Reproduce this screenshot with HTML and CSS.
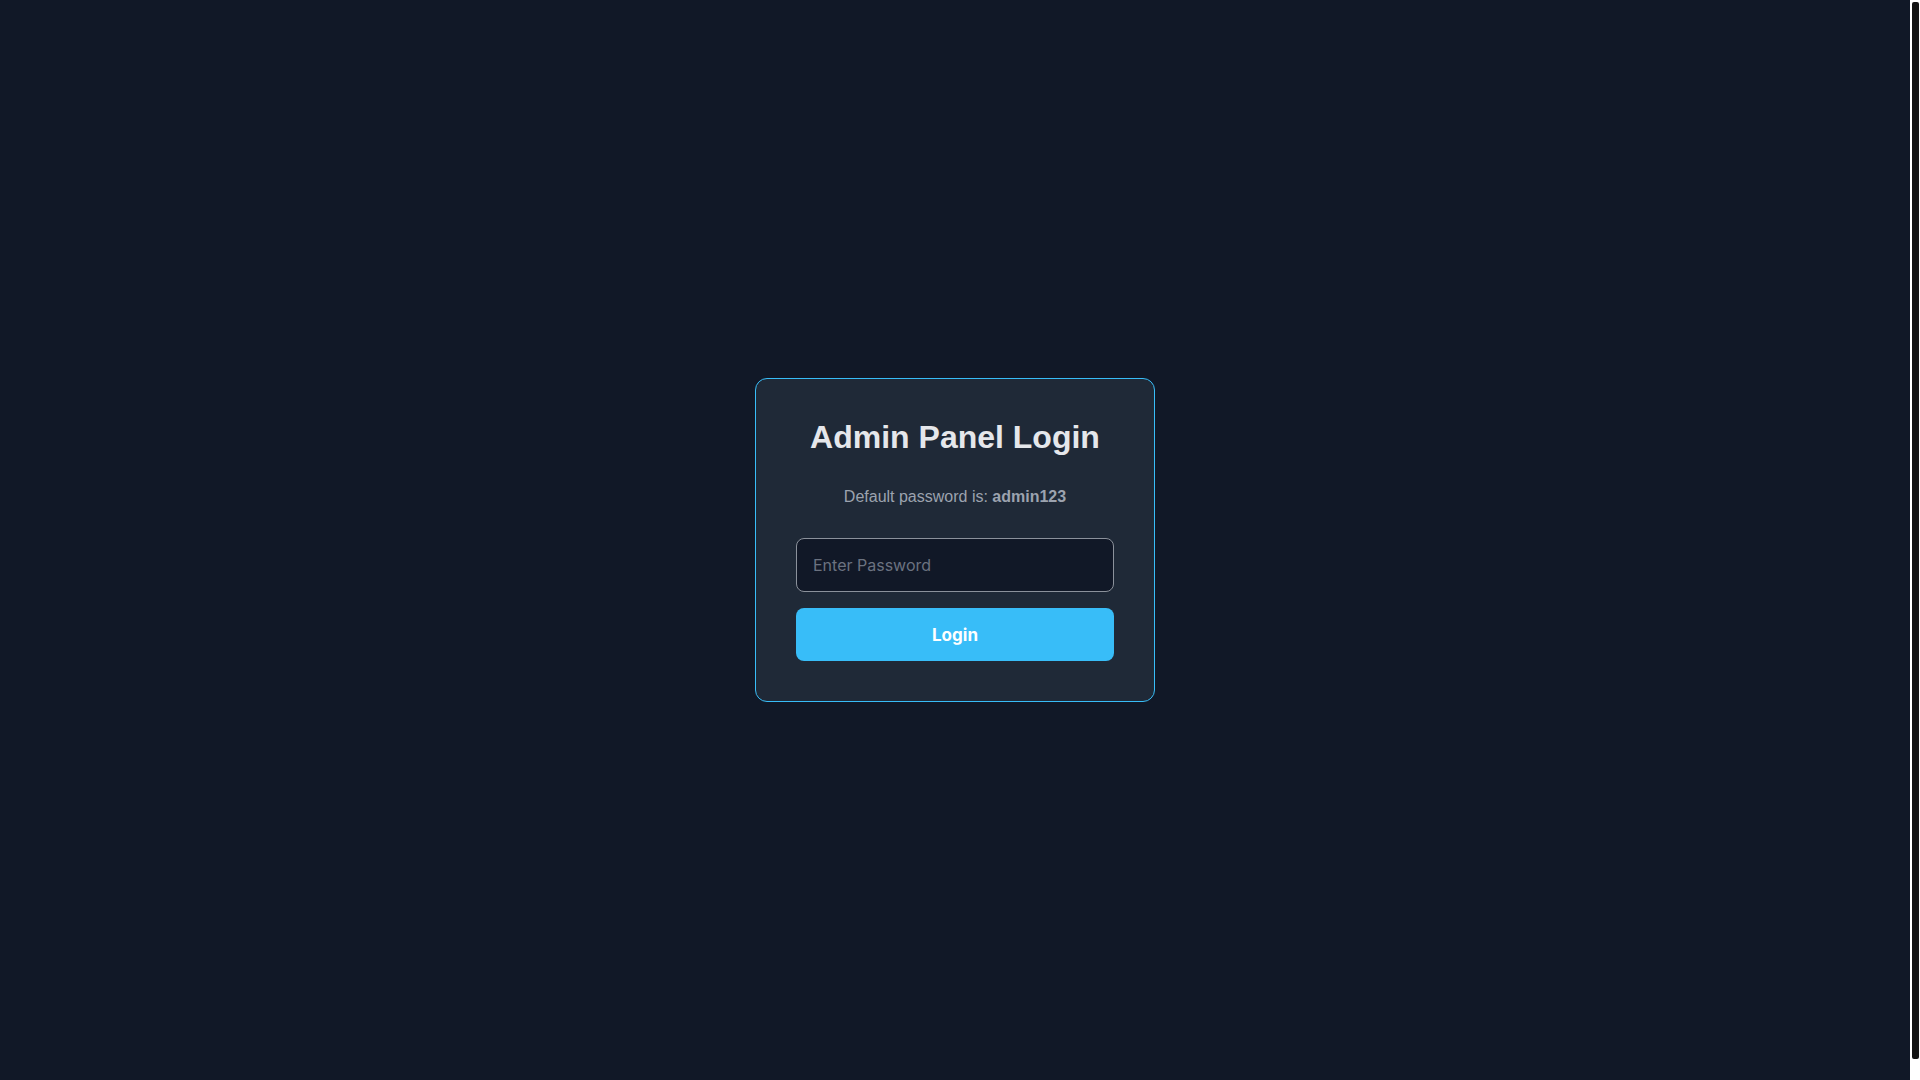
FILE: index.html
```html
<html>
  <head>
    <meta name="viewport" content="width=device-width, initial-scale=1">
    <link rel="stylesheet" href="styles.css">
    <title>Admin Panel Login</title>
  </head>
  <body>
    <main class="page">
      <form class="login-card" onsubmit="return false;">
        <h1 class="login-title">Admin Panel Login</h1>
        <p class="login-hint">Default password is: <b>admin123</b></p>
        <input class="login-input" type="password" placeholder="Enter Password">
        <button class="login-button" type="submit">Login</button>
      </form>
    </main>
    <div class="scrollbar"><div class="scrollbar-thumb"></div></div>
  </body>
</html>
```

FILE: styles.css
```css
html {
  background-color: #111827;
}

body {
  margin: 0;
  font-family: "Liberation Sans", Arial, sans-serif;
  background-color: #111827;
  color: #e5e7eb;
  overflow: hidden;
}

.page {
  min-height: 100vh;
  margin-right: 10px;
  display: flex;
  align-items: center;
  justify-content: center;
}

.scrollbar {
  position: fixed;
  top: 0;
  right: 0;
  width: 10px;
  height: 100vh;
  background: #ffffff;
  box-sizing: border-box;
  padding: 2px 1px 21px 2px;
}

.scrollbar-thumb {
  height: 100%;
  background: #121212;
  border-radius: 2px;
}

.login-card {
  width: 400px;
  box-sizing: border-box;
  padding: 40px;
  margin: 0;
  background-color: #1f2937;
  border: 1px solid #38bdf8;
  border-radius: 12px;
  display: flex;
  flex-direction: column;
  text-align: center;
}

.login-title {
  margin: 0 0 32px;
  font-size: 32px;
  font-weight: bold;
  color: #e5e7eb;
}

.login-hint {
  margin: 0 0 32px;
  font-size: 16px;
  color: #9ca3af;
}

.login-input {
  height: 54px;
  box-sizing: border-box;
  padding: 0 16px;
  margin-bottom: 16px;
  font-family: Inter, "Noto Sans", sans-serif;
  font-size: 16px;
  color: #e5e7eb;
  background-color: #111827;
  border: 1px solid #8b919b;
  border-radius: 8px;
  outline: none;
}

.login-input::placeholder {
  color: #6b7280;
}

.login-button {
  height: 53px;
  box-sizing: border-box;
  font-family: Inter, "Noto Sans", sans-serif;
  font-size: 17px;
  font-weight: 700;
  color: #ffffff;
  background-color: #38bdf8;
  border: none;
  border-radius: 8px;
  cursor: pointer;
}
```
